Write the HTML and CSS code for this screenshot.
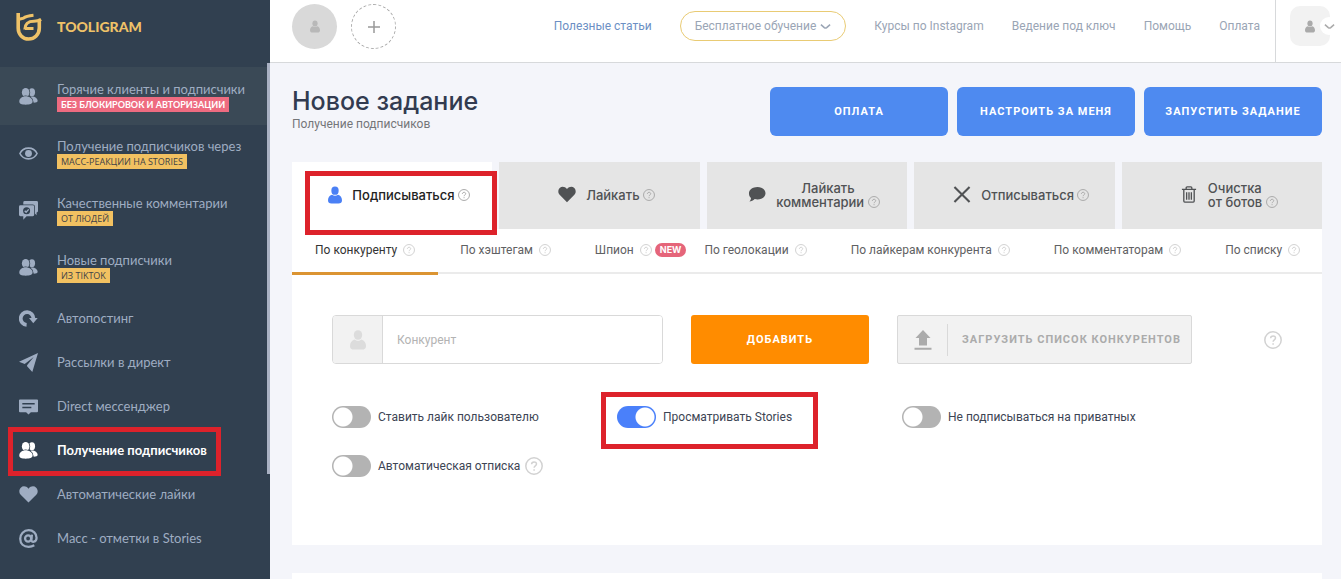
FILE: index.html
```html
<!DOCTYPE html>
<html lang="ru">
<head>
<meta charset="utf-8">
<title>Tooligram</title>
<meta name="viewport" content="width=device-width, initial-scale=1">
<link rel="stylesheet" href="styles.css">
</head>
<body>
<svg class="sprite" aria-hidden="true">
  <symbol id="users" viewBox="0 0 20 18">
    <ellipse cx="13.6" cy="4.6" rx="3.3" ry="4.2"/>
    <path d="M12 9.200c4-.8 7.600 1.400 7.600 4.400 0 1.700-1.600 2-4 2z"/>
    <g class="cut"><ellipse cx="7" cy="4.800" rx="4" ry="4.700"/><path d="M.3 14.300C.3 11 3.500 8.800 7 8.800s7.300 2.200 7.300 5.500c0 2.500-3 3.300-7.300 3.300S.3 16.800.3 14.300z"/></g>
  </symbol>
  <symbol id="user" viewBox="0 0 16 20">
    <ellipse cx="8" cy="5" rx="4.200" ry="4.800"/>
    <path d="M4.500 9.600Q8 12.200 11.500 9.600C14.400 10.500 16 13 16 16c0 2.600-1.400 3.600-4 3.600H4c-2.600 0-4-1-4-3.600 0-3 1.600-5.500 4.500-6.400z"/>
  </symbol>
  <symbol id="heart" viewBox="0 0 20 18">
    <path d="M10 17.500 1.800 9.300C-.2 7.200-.1 3.700 1.900 1.800 4.100-.3 7.700 0 10 3 12.300 0 15.900-.3 18.100 1.800c2 1.900 2.100 5.400.1 7.500z"/>
  </symbol>
  <symbol id="help" viewBox="0 0 18 18">
    <circle cx="9" cy="9" r="8.200" fill="none" stroke="currentColor" stroke-width="1.500"/>
    <path d="M6.600 7.300c0-3.200 4.900-3.100 4.900-.2 0 1.800-2.400 1.900-2.400 3.700M9.100 12.300v1.500" fill="none" stroke="currentColor" stroke-width="1.500"/>
  </symbol>
  <symbol id="chevron" viewBox="0 0 12 7"><path d="M1 1.500 4.700 4.700Q6 5.700 7.300 4.700L11 1.500" fill="none" stroke="currentColor" stroke-width="1.700"/></symbol>
</svg>

<div class="app">
  <aside class="sidebar">
    <a class="brand" href="#">
      <svg class="brand-mark" viewBox="0 0 26 28">
        <path d="M2.200 0V15C2.200 21.500 6.700 26 12.600 26S23.300 21.500 23.300 15V8"/>
        <path class="thin" d="M2 6.500 7.500 5.200Q10 3 17.500 2.300M25.100 6.400Q22 8.300 18 8.300C12.500 8.300 9 10 8.800 16.500M9 15.500h8.500"/>
      </svg>
      <span>TOOLIGRAM</span>
    </a>
    <nav class="menu">
      <a class="item double hot" href="#"><svg class="ico"><use href="#users"/></svg><span>Горячие клиенты и подписчики<small class="tag pink">БЕЗ БЛОКИРОВОК И АВТОРИЗАЦИИ</small></span></a>
      <a class="item double" href="#"><svg class="ico" viewBox="0 0 20 18"><path d="M1 9C4.500 1.500 15.500 1.500 19 9 15.500 16.500 4.500 16.500 1 9z" fill="none" stroke="currentColor" stroke-width="1.700"/><circle cx="10" cy="9" r="3.600"/></svg><span>Получение подписчиков через<small class="tag">МАСС-РЕАКЦИИ НА STORIES</small></span></a>
      <a class="item double" href="#"><svg class="ico" viewBox="0 0 20 20"><path d="M6 0h12.500Q20 0 20 1.500v9q0 1.500-1.500 1.500v3L16.500 13H6V4.500H4.500V1.500Q4.500 0 6 0z"/><path class="cut" d="M1.500 4.500h13q1.500 0 1.500 1.500v8.500q0 1.500-1.500 1.500H8l-3.500 3.800V16h-3Q0 16 0 14.500V6q0-1.500 1.500-1.500z"/><circle cx="8" cy="10.300" r="3.700" class="hole"/><path d="m6 10.200 1.500 1.600 2.700-3" fill="none" stroke="currentColor" stroke-width="1.500"/></svg><span>Качественные комментарии<small class="tag">ОТ ЛЮДЕЙ</small></span></a>
      <a class="item double" href="#"><svg class="ico"><use href="#users"/></svg><span>Новые подписчики<small class="tag">ИЗ TIKTOK</small></span></a>
      <a class="item" href="#"><svg class="ico" viewBox="0 0 20 18"><path d="M8 15.700A6.700 6.700 0 1 1 15.200 9" fill="none" stroke="currentColor" stroke-width="4"/><path d="M10.500 8.500h9.200L15 14z"/></svg><span>Автопостинг</span></a>
      <a class="item" href="#"><svg class="ico" viewBox="0 0 20 20"><path d="M20 0 0 9.300l6 2.200L15.500 4.200 8.500 13v1l5.500 6z"/></svg><span>Рассылки в директ</span></a>
      <a class="item" href="#"><svg class="ico" viewBox="0 0 20 18"><path d="M1 1.500h18q1 0 1 1V14q0 1-1 1h-6.500L10 17.500 7.500 15H1q-1 0-1-1V2.500q0-1 1-1z"/><path d="M3.500 6h13M3.500 10h9.500" class="rule"/></svg><span>Direct мессенджер</span></a>
      <a class="item current marked" href="#"><svg class="ico"><use href="#users"/></svg><span>Получение подписчиков</span></a>
      <a class="item" href="#"><svg class="ico"><use href="#heart"/></svg><span>Автоматические лайки</span></a>
      <a class="item" href="#"><svg class="ico" viewBox="0 0 20 20"><g fill="none" stroke="currentColor" stroke-width="2.400"><circle cx="9.600" cy="10" r="3.200"/><path d="M13.600 5.800 13 11.500c-.2 3.300 5.500 2.500 5.500-2.300 0-4.700-3.700-7.900-8.300-7.900-5.200 0-8.900 3.900-8.900 8.900 0 5.200 3.700 8.500 8.800 8.500 2.400 0 4.200-.5 6-1.500"/></g></svg><span>Масс - отметки в Stories</span></a>
    </nav>
    <i class="scroll-thumb"></i>
  </aside>

  <div class="page">
    <header class="topbar">
      <div class="accounts">
        <button class="account" aria-label="Аккаунт"><svg><use href="#user"/></svg></button>
        <button class="account add" aria-label="Добавить аккаунт"><svg viewBox="0 0 14 14"><path d="M7 1v12M1 7h12" stroke="currentColor" stroke-width="1.500"/></svg></button>
      </div>
      <nav class="links">
        <a class="blue" href="#">Полезные статьи</a>
        <a class="pill" href="#">Бесплатное обучение<svg><use href="#chevron"/></svg></a>
        <a href="#">Курсы по Instagram</a>
        <a href="#">Ведение под ключ</a>
        <a href="#">Помощь</a>
        <a href="#">Оплата</a>
      </nav>
      <button class="profile" aria-label="Профиль">
        <span class="profile-pic"><svg><use href="#user"/></svg></span>
        <span class="profile-arrow"><svg><use href="#chevron"/></svg></span>
      </button>
    </header>

    <main class="content">
      <div class="heading">
        <div>
          <h1>Новое задание</h1>
          <p>Получение подписчиков</p>
        </div>
        <div class="actions">
          <button>ОПЛАТА</button>
          <button>НАСТРОИТЬ ЗА МЕНЯ</button>
          <button>ЗАПУСТИТЬ ЗАДАНИЕ</button>
        </div>
      </div>

      <div class="tabs">
        <button class="tab active marked"><svg class="tab-user"><use href="#user"/></svg><span>Подписываться <svg class="help"><use href="#help"/></svg></span></button>
        <button class="tab"><svg class="tab-ico"><use href="#heart"/></svg><span>Лайкать <svg class="help"><use href="#help"/></svg></span></button>
        <button class="tab"><svg class="tab-ico" viewBox="0 0 18 18"><path d="M9.500 1C14.500 1 18 4 18 7.700s-3.500 6.500-8.500 6.500c-1 0-2-.1-2.900-.4C5 15.400 3 16.300 1 16.300c1-.9 1.600-2.200 1.600-3.600C1.200 11.500.5 9.700.5 7.700.5 4 4.500 1 9.500 1z"/></svg><span>Лайкать<br>комментарии <svg class="help"><use href="#help"/></svg></span></button>
        <button class="tab"><svg class="tab-ico" viewBox="0 0 18 18"><path d="m1 1 16 16M17 1 1 17" stroke="currentColor" stroke-width="2.200"/></svg><span>Отписываться <svg class="help"><use href="#help"/></svg></span></button>
        <button class="tab"><svg class="tab-ico" viewBox="0 0 16 18"><path d="M.5 3.500h15M5 3.500V2q0-1 1-1h4q1 0 1 1v1.500M2.500 4v12q0 1 1 1h9q1 0 1-1V4M5.500 6.500v8M8 6.500v8M10.500 6.500v8" fill="none" stroke="currentColor" stroke-width="1.400"/></svg><span class="left">Очистка<br>от ботов <svg class="help"><use href="#help"/></svg></span></button>
      </div>

      <section class="card">
        <nav class="subtabs">
          <a class="on" href="#">По конкуренту<svg class="help"><use href="#help"/></svg></a>
          <a href="#">По хэштегам<svg class="help"><use href="#help"/></svg></a>
          <a class="spy" href="#">Шпион<svg class="help"><use href="#help"/></svg><b>NEW</b></a>
          <a href="#">По геолокации<svg class="help"><use href="#help"/></svg></a>
          <a href="#">По лайкерам конкурента<svg class="help"><use href="#help"/></svg></a>
          <a href="#">По комментаторам<svg class="help"><use href="#help"/></svg></a>
          <a href="#">По списку<svg class="help"><use href="#help"/></svg></a>
        </nav>
        <div class="form">
          <div class="row">
            <label class="field"><span><svg><use href="#user"/></svg></span><input type="text" placeholder="Конкурент" aria-label="Конкурент"></label>
            <button class="add-btn">ДОБАВИТЬ</button>
            <button class="upload"><span class="upload-ico"><svg viewBox="0 0 18 20"><path d="M9 0l7.500 8H13v7.500H5V8H1.500zM.5 17.800h17v1.900H.5z"/></svg></span><span class="upload-text">ЗАГРУЗИТЬ СПИСОК КОНКУРЕНТОВ</span></button>
            <svg class="help big push"><use href="#help"/></svg>
          </div>
          <div class="options">
            <label class="option"><input type="checkbox"><span>Ставить лайк пользователю</span></label>
            <label class="option marked"><input type="checkbox" checked><span>Просматривать Stories</span></label>
            <label class="option"><input type="checkbox"><span>Не подписываться на приватных</span></label>
            <label class="option"><input type="checkbox"><span>Автоматическая отписка</span><svg class="help big"><use href="#help"/></svg></label>
          </div>
        </div>
      </section>
      <section class="card next"></section>
    </main>
  </div>
</div>
</body>
</html>
```
FILE: styles.css
```css
* { box-sizing: border-box; }
body {
  margin: 0;
  background: #f4f5fa;
  color: #3d4554;
  font: 12px/16px Roboto, "Liberation Sans", sans-serif;
}
a { color: inherit; text-decoration: none; }
button { border: 0; padding: 0; margin: 0; font: inherit; color: inherit; background: none; cursor: pointer; }
svg { fill: currentColor; flex: none; }
h1, p { margin: 0; }
.sprite { position: absolute; width: 0; height: 0; }
.app { display: flex; height: 100vh; overflow: hidden; }

/* Highlight frames laid over the marked controls */
.marked { position: relative; }
.marked::after { content: ""; position: absolute; border: 5px solid #dd222b; pointer-events: none; z-index: 2; }
.item.marked::after { inset: -1px 49px -4px 8px; }
.tab.marked::after { inset: 9px -5px -6px 13px; }
.option.marked::after { inset: -14px -26px -21px -16px; }

/* Sidebar */
.sidebar { position: relative; flex: none; width: 270px; background: #314050; color: #9fadc2; font-family: Lato, "Noto Sans", sans-serif; font-size: 13px; overflow: hidden; }
.brand { display: flex; align-items: center; gap: 15px; height: 67px; padding: 0 16px 14px; color: #efc268; font-size: 14px; font-weight: 900; }
.brand-mark { width: 26px; height: 28px; fill: none; stroke: currentColor; stroke-width: 3.600; }
.brand-mark .thin { stroke-width: 3; }
.item { display: flex; align-items: center; gap: 19px; height: 44px; padding-left: 19px; white-space: nowrap; }
.double { height: 57px; }
.hot { width: 267px; height: 58px; background: #3a4956; --back: #3a4956; }
.current { color: #fff; font-weight: 700; }
.ico { width: 19px; height: 19px; }
.cut { stroke: var(--back, #314050); stroke-width: 1.600; paint-order: stroke; }
.hole { fill: #314050; }
.rule { stroke: #314050; stroke-width: 1.600; }
.tag { display: table; height: 15px; padding: 0 4px; background: #f2c161; color: #3e4247; font: 9px/15px "Open Sans", sans-serif; }
.pink { background: #ee6b80; color: #fff; font-family: Lato, sans-serif; font-weight: 700; }
.scroll-thumb { position: absolute; right: 0; top: 63px; width: 3px; height: 411px; background: #a9b1c3; }

/* Top bar */
.page { flex: 1; min-width: 0; }
.topbar { display: flex; justify-content: space-between; height: 63px; padding-left: 22px; background: #fff; border-bottom: 1px solid #d7d9db; }
.accounts { display: flex; gap: 14px; padding-top: 4px; }
.account { display: flex; align-items: center; justify-content: center; width: 45px; height: 45px; border-radius: 50%; background: #d9d9d9; color: #b8b8b8; }
.account svg { width: 10px; height: 13px; }
.account.add { background: none; border: 1px dashed #aaa; color: #999; }
.account.add svg { width: 14px; height: 14px; }
.links { display: flex; align-items: center; gap: 28px; height: 52px; margin-left: auto; padding-right: 15px; color: #9aa5b5; white-space: nowrap; }
.blue { color: #6c8fc4; }
.pill { display: flex; align-items: center; height: 30px; padding: 0 14px; border: 1px solid #e9cb74; border-radius: 15px; }
.pill svg, .profile-arrow svg { width: 11px; height: 7px; }
.pill svg { margin-left: 4px; }
.profile { display: flex; width: 66px; padding: 6px 0 0 14px; border-left: 1px solid #d7d9db; color: #aaa; }
.profile-pic { display: flex; align-items: center; justify-content: center; width: 40px; height: 40px; border-radius: 10px; background: #f2f2f2; }
.profile-pic svg { width: 10px; height: 13px; }
.profile-arrow { display: flex; align-items: center; justify-content: center; flex: none; width: 18px; height: 18px; margin: 11px 0 0 -10px; border-radius: 50%; background: #fff; }

/* Page heading */
.content { padding: 24px 19px 0 22px; }
.heading { display: flex; justify-content: space-between; }
h1 { color: #323b50; font: 500 25px/29px Inter, sans-serif; }
.heading p { color: #747679; }
.actions { display: flex; gap: 9px; }
.actions button { width: 178px; height: 49px; border-radius: 6px; background: #4e8af0; color: #fff; }
.actions button, .add-btn, .upload { font-size: 11px; font-weight: 700; letter-spacing: 1px; }

/* Main tabs */
.tabs { display: grid; grid-template-columns: repeat(5, 1fr); gap: 7px; margin-top: 26px; }
.tab { display: flex; align-items: center; justify-content: center; gap: 10px; height: 67px; padding: 0 0 2px 14px; background: #e5e5e5; color: #505254; font: 500 13px/14px Inter, sans-serif; }
.tab.active { background: #fff; color: #222; }
.tab .left { text-align: left; }
.tab-user { width: 14px; height: 18px; color: #4a80f5; }
.tab-ico { width: 18px; height: 17px; }
.help { width: 12px; height: 12px; color: #aaa; vertical-align: -1px; }
.big { width: 18px; height: 18px; color: #d2d2d2; }

/* Card with sub-tabs and form */
.card { background: #fff; }
.subtabs { display: flex; justify-content: space-between; height: 45px; border-bottom: 2px solid #ebebeb; color: #5f6163; white-space: nowrap; }
.subtabs a { display: flex; align-items: center; gap: 6px; height: 46px; padding: 0 22px 4px; }
.subtabs .help { color: #d2d2d2; }
.subtabs .on { padding: 0 23px 1px; border-bottom: 3px solid #db9432; color: #333; }
.subtabs .spy { margin-right: -4px; padding-right: 0; }
.spy b { margin-left: -3px; padding: 0 5px; border-radius: 7px; background: #e5657a; color: #fff; font: 700 9px/14px Inter, sans-serif; }
.form { padding: 41px 40px 68px; }
.row { display: flex; align-items: center; gap: 28px; }
.field { display: flex; width: 331px; height: 49px; border: 1px solid #d9d9d9; border-radius: 4px; overflow: hidden; }
.field span { display: flex; align-items: center; justify-content: center; width: 50px; background: #f2f2f2; border-right: 1px solid #d9d9d9; color: #dcdcdc; }
.field svg { width: 16px; height: 20px; }
.field input { flex: 1; min-width: 0; border: 0; outline: 0; padding: 0 14px; font: inherit; background: #fff; }
.field input::placeholder { color: #b3b3b3; opacity: 1; }
.add-btn { width: 178px; height: 49px; border-radius: 3px; background: #ff8c00; color: #fff; }
.upload { display: flex; align-items: center; height: 49px; border: 1px solid #d9d9d9; border-radius: 2px; background: #f2f2f2; color: #ababab; white-space: nowrap; }
.upload-ico { display: flex; align-items: center; justify-content: center; width: 50px; height: 32px; border-right: 1px solid #d9d9d9; }
.upload-ico svg { width: 18px; height: 20px; }
.upload-text { padding: 0 10px 0 14px; }
.push { margin-left: auto; }
.options { display: grid; grid-template-columns: repeat(3, 285px); row-gap: 27px; margin-top: 42px; }
.option { display: flex; align-items: center; justify-self: start; gap: 7px; height: 22px; white-space: nowrap; }
.option input { appearance: none; flex: none; width: 39px; height: 22px; margin: 0; border-radius: 11px; background: radial-gradient(circle at 11px 11px, #fff 9px, #b3b3b3 10px); }
.option input:checked { background: radial-gradient(circle at 28px 11px, #fff 9px, #4a80fa 10px); }
.option .help { margin-left: -2px; }
.next { height: 80px; margin-top: 28px; }
```
